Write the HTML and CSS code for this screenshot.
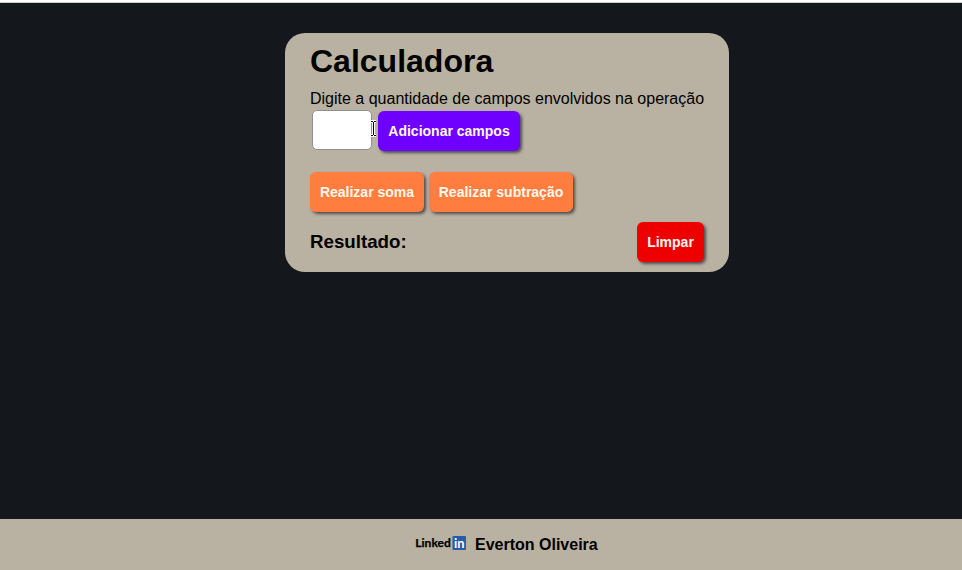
FILE: index.html
```html
<!DOCTYPE html>
<html lang="pt-BR">
<head>
<meta charset="utf-8">
<title>Calculadora</title>
<link rel="stylesheet" href="styles.css">
</head>
<body>
<main>
  <section class="card">
    <h1>Calculadora</h1>
    <label class="prompt" for="quantidade">Digite a quantidade de campos envolvidos na operação</label>
    <div class="row fields">
      <input id="quantidade" type="text">
      <button class="btn add">Adicionar campos</button>
      <svg class="cursor" width="7" height="17" viewBox="0 0 7 17" aria-hidden="true">
        <path class="cursor-outline" d="M1 1.5H6M3.5 1.5v14M1 15.5H6"/>
        <path class="cursor-line" d="M1 1.5H3M4 1.5H6M3.5 2v13M1 15.5H3M4 15.5H6"/>
      </svg>
    </div>
    <div class="row operations">
      <button class="btn op sum">Realizar soma</button>
      <button class="btn op sub">Realizar subtração</button>
    </div>
    <div class="row result">
      <h3>Resultado:</h3>
      <button class="btn clear">Limpar</button>
    </div>
  </section>
</main>
<footer>
  <svg class="logo" width="51" height="16" viewBox="0 0 51 16">
    <rect x="37.5" y="1" width="13.5" height="14" rx="1" fill="#2a5ba8"/>
    <text class="logo-text" x="0.3" y="12.3" textLength="35.5" lengthAdjust="spacingAndGlyphs">Linked</text>
    <text class="logo-in" x="39" y="12.5" textLength="10.5" lengthAdjust="spacingAndGlyphs">in</text>
  </svg>
  <span class="author">Everton Oliveira</span>
</footer>
</body>
</html>
```
FILE: styles.css
```css
* {
  box-sizing: border-box;
  margin: 0;
  padding: 0;
}

body {
  display: flex;
  flex-direction: column;
  height: 100vh;
  overflow: hidden;
  border-top: 2px solid #fff;
  background: #14181c;
  color: #000;
  font-family: "Liberation Sans", Arial, sans-serif;
  font-size: 16px;
}

main {
  flex: 1;
  border-top: 1px solid #c9cbcc;
  padding: 30px 0 0 285px;
}

.card {
  width: 444px;
  height: 239px;
  padding: 10px 25px;
  border-radius: 20px;
  background: #b9b1a1;
}

h1 {
  font-size: 32px;
  line-height: 36px;
}

.prompt {
  display: block;
  margin-top: 11px;
  line-height: 18px;
  white-space: nowrap;
}

.row {
  display: flex;
  height: 40px;
}

.fields {
  position: relative;
  margin-top: 3px;
}

input {
  width: 60px;
  height: 40px;
  margin: -1px 6px 0 2px;
  border: 1px solid #8f8f95;
  border-radius: 5px;
  background: #fff;
}

.btn {
  height: 40px;
  border: 0;
  border-radius: 6px;
  box-shadow: 2px 2px 3px #505050;
  color: #fff8ec;
  font: bold 14px "Liberation Sans", Arial, sans-serif;
  white-space: nowrap;
}

.add {
  width: 142px;
  background: #6f00ff;
}

.cursor {
  position: absolute;
  left: 60px;
  top: 9px;
}

.cursor path {
  fill: none;
}

.cursor-outline {
  stroke: #fff;
  stroke-width: 3;
}

.cursor-line {
  stroke: #000;
  stroke-width: 1;
}

.operations {
  gap: 5px;
  margin-top: 21px;
}

.op {
  background: #ff7d3e;
}

.sum {
  width: 114px;
}

.sub {
  width: 144px;
}

.result {
  align-items: center;
  justify-content: space-between;
  margin-top: 10px;
}

h3 {
  font-size: 18.72px;
}

.clear {
  width: 67px;
  background: #ee0000;
}

footer {
  display: flex;
  flex: none;
  align-items: center;
  height: 51px;
  padding-left: 415px;
  background: #b9b1a1;
}

.logo {
  margin-top: -3px;
}

.logo-text,
.logo-in {
  font-family: Lato, "Open Sans", sans-serif;
  font-size: 11.3px;
  font-weight: 700;
}

.logo-text {
  stroke: #000;
  stroke-width: 0.25;
}

.logo-in {
  fill: #fff;
  font-size: 12.5px;
}

.author {
  margin-left: 9px;
  font-weight: bold;
}
```
